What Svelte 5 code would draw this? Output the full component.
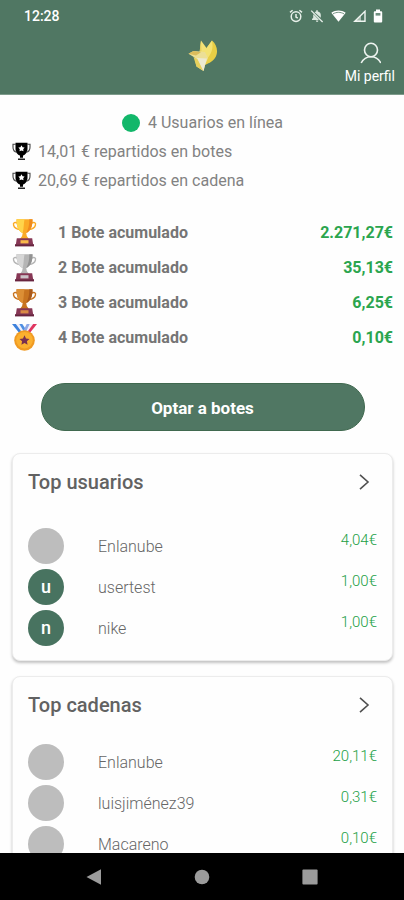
<script>
  const totals = ['14,01 € repartidos en botes', '20,69 € repartidos en cadena'];

  const pots = [
    { kind: 'gold', label: '1 Bote acumulado', amount: '2.271,27€' },
    { kind: 'silver', label: '2 Bote acumulado', amount: '35,13€' },
    { kind: 'bronze', label: '3 Bote acumulado', amount: '6,25€' },
    { kind: 'medal', label: '4 Bote acumulado', amount: '0,10€' }
  ];

  const cupColors = {
    gold: { light: '#ffd54a', mid: '#fbab26', dark: '#ef8a1d', plate: '#f9b94a' },
    silver: { light: '#d6d6d6', mid: '#b5b5b5', dark: '#929292', plate: '#cbc3c8' },
    bronze: { light: '#dc8f35', mid: '#c87420', dark: '#a9591a', plate: '#d98a45' }
  };

  const boards = [
    {
      title: 'Top usuarios',
      roomy: true,
      rows: [
        { name: 'Enlanube', initial: '', amount: '4,04€' },
        { name: 'usertest', initial: 'u', amount: '1,00€' },
        { name: 'nike', initial: 'n', amount: '1,00€' }
      ]
    },
    {
      title: 'Top cadenas',
      roomy: false,
      rows: [
        { name: 'Enlanube', initial: '', amount: '20,11€' },
        { name: 'luisjiménez39', initial: '', amount: '0,31€' },
        { name: 'Macareno', initial: '', amount: '0,10€' }
      ]
    }
  ];
</script>

<div class="screen">
  <header>
    <div class="status">
      <span>12:28</span>
      <div class="status-icons">
        <svg width="14" height="14" viewBox="0 0 14 14" fill="none" stroke="#e8f0ea" stroke-width="1.5">
          <circle cx="7" cy="7.6" r="4.8" />
          <path d="M7 5v3l1.8 1.2M1 3.4 3.6 1.2M13 3.4 10.4 1.2" />
        </svg>
        <svg width="14" height="14" viewBox="0 0 14 14">
          <path d="M4.6 3.3A3.6 3.6 0 0 1 6.2 2.4V1.2h1.6v1.2A3.7 3.7 0 0 1 10.8 6v2.8zM3.4 5.2 9 10.9H2v-1l1.2-1.2V6zM5.8 11.6h2.6a1.3 1.3 0 0 1-2.6 0z" fill="#dce8e0" />
          <path d="M1.2 1.6 12.6 13" stroke="#e8f0ea" stroke-width="1.3" />
        </svg>
        <svg width="15" height="12" viewBox="0 0 15 12">
          <path d="M.3 2.8C4.5-.4 10.5-.4 14.7 2.8L7.5 11.8z" fill="#fff" />
          <path d="M2 3.9C5.5 1.8 9.5 1.8 13 3.9" fill="none" stroke="#507763" stroke-width=".8" />
        </svg>
        <svg width="13" height="12" viewBox="0 0 13 12">
          <path d="M1.8 11.2 12 1.3v9.9z" fill="none" stroke="#f0f5f1" stroke-width="1.4" />
          <path d="M2 11.2 8 5.4v5.8z" fill="#f0f5f1" opacity=".55" />
        </svg>
        <svg width="10" height="14" viewBox="0 0 10 14">
          <path d="M3 .6h4v1.6h1.2q1 0 1 1v9.2q0 1-1 1H1.8q-1 0-1-1V3.2q0-1 1-1H3z" fill="#fff" />
          <path d="M2.6 4h4.8v2.6H2.600z" fill="#6f9080" />
        </svg>
      </div>
    </div>
    <div class="bar">
      <svg class="logo" width="32" height="32" viewBox="0 0 32 32" role="img" aria-label="Logo">
        <path d="M15 .5 20.500 8 19 14 13.500 13z" fill="#f3e277" />
        <path d="M15 .5 15.500 11 13.500 13z" fill="#e5d05c" />
        <path d="M26 .5C31.500 5 32.500 13 29 18 26 22.500 21.500 23.500 19 25L15.500 15z" fill="#e8ce45" />
        <path d="M26 .5C27.500 8 26 14 19 21L14.500 14 18.500 9.500 20.500 8z" fill="#f3e272" />
        <path d="M2.500 13.700 7.500 11 19 12 22 18 19 25 17.500 31 10.500 26.500 8.500 17.500z" fill="#ecdf96" />
        <path d="M2.500 13.700 7.500 11 15 12.300 10 15.500z" fill="#dcbc5c" />
        <path d="M7.500 17 12 19.500 17.500 31 10.500 26.500z" fill="#e6d05c" />
        <path d="M11 18 21 18.500 19 25 17.500 31z" fill="#ede9d0" />
      </svg>
      <a class="profile" href="#perfil">
        <svg width="22" height="22" viewBox="0 0 22 22" fill="none" stroke="#eef4f0" stroke-width="1.6">
          <ellipse cx="12" cy="8" rx="6.5" ry="6.7" />
          <path d="M2.200 21C4.200 17 7.500 14.700 12 14.700S19.800 17 21.800 21" />
        </svg>
        <span>Mi perfil</span>
      </a>
    </div>
  </header>

  <main>
    <p class="online"><i class="dot"></i>4 Usuarios en línea</p>
    {#each totals as total}
      <p class="total">
        <svg width="19" height="20" viewBox="0 0 19 20">
          <path d="M3.500.8h12v5.700c0 3.900-2.200 6.400-4.500 7.100v2.100H8v-2.100C5.700 12.900 3.500 10.400 3.500 6.500z" fill="#000" />
          <path d="M4 2.300H1v2.900c0 3 1.600 4.700 4 5M15 2.300h3v2.900c0 3-1.600 4.700-4 5" fill="none" stroke="#444" stroke-width="1.100" />
          <path d="M6 16.500h7V18H6z" fill="#222" />
          <path d="m9.500 3.300 1.100 1.900 2 .4-1.400 1.600.3 2.100-2-.9-2 .9.300-2.100-1.400-1.600 2-.4z" fill="#fff" />
        </svg>
        {total}
      </p>
    {/each}

    <ul class="pots">
      {#each pots as pot}
        <li>
          {#if pot.kind === 'medal'}
            <svg width="26" height="30" viewBox="0 0 26 30">
              <path d="M0 1h5.500l8 9.500-3.500 3z" fill="#3d82dc" />
              <path d="M3.800 1h3.500l6.500 8-1.800 3z" fill="#f1f1fb" />
              <path d="M7.300 1h3l3 4.500L11.500 8z" fill="#4f8fe2" />
              <path d="M25 1h-5.500l-8 9.500 3.500 3z" fill="#e0355f" />
              <path d="M21.200 1h-3.500l-6.500 8 1.800 3z" fill="#f5f0fa" />
              <path d="M17.700 1h-3l-4 8 2 2.500z" fill="#8fa9e6" />
              <circle cx="12.500" cy="17.500" r="10.300" fill="#f09a22" />
              <circle cx="12.500" cy="17.200" r="8.300" fill="#fbb02f" />
              <path d="m12.500 12.300 1.500 3.200 3.500.4-2.600 2.400.7 3.500-3.100-1.700-3.100 1.700.7-3.500-2.600-2.400 3.500-.4z" fill="#782f50" />
            </svg>
          {:else}
            {@const c = cupColors[pot.kind]}
            <svg width="26" height="30" viewBox="0 0 26 30">
              <path d="M6 5.300C3 3.600.8 4.600 1.600 7.300c.7 2.500 3.400 4 6.500 4.300M19 5.300c3-1.700 5.200-.7 4.400 2-.7 2.500-3.400 4-6.500 4.300" fill="none" stroke={c.mid} stroke-width="1.400" />
              <path d="M4.500 1.200h16c.2 7-1.900 11.900-6.300 13.700l.6 3.200 2.100 3H8l2.100-3 .6-3.200C6.300 13.100 4.300 8.200 4.500 1.200z" fill={c.mid} />
              <path d="M4.500 1.200h8c-1 5-.5 9-1.800 13.700C6.300 13.100 4.300 8.200 4.500 1.200z" fill={c.light} />
              <path d="M17.300 1.200h3.200c.2 7-1.900 11.900-6.300 13.700 2.200-4 3.200-8.200 3.100-13.700z" fill={c.dark} />
              <path d="M4.800 20.200h15.400l1 6.500H3.800z" fill="#873755" />
              <path d="M3 26.200h19v2.200H3z" fill="#68243f" />
              <path d="M8.500 22.200h8v3.200h-8z" fill={c.plate} />
            </svg>
          {/if}
          <span class="pot-label">{pot.label}</span>
          <span class="pot-amount">{pot.amount}</span>
        </li>
      {/each}
    </ul>

    <button class="cta" type="button">Optar a botes</button>

    {#each boards as board}
      <section class="card" class:roomy={board.roomy}>
        <a class="card-head" href="#ranking">
          <h2>{board.title}</h2>
          <svg width="12" height="18" viewBox="0 0 12 18" fill="none" stroke="#505050" stroke-width="1.600">
            <path d="m2 1.800 8 7.200-8 7.200" />
          </svg>
        </a>
        <ul>
          {#each board.rows as row}
            <li class="user">
              <span class="avatar" class:filled={row.initial}>{row.initial}</span>
              <span class="name">{row.name}</span>
              <span class="amount">{row.amount}</span>
            </li>
          {/each}
        </ul>
      </section>
    {/each}
  </main>

  <nav>
    <button type="button" aria-label="Atrás">
      <svg width="16" height="16" viewBox="0 0 16 16"><path d="M.5 8 15 .3v15.400z" fill="#9b9b9b" /></svg>
    </button>
    <button type="button" aria-label="Inicio">
      <svg width="16" height="16" viewBox="0 0 16 16"><circle cx="8" cy="8" r="7.300" fill="#9b9b9b" /></svg>
    </button>
    <button type="button" aria-label="Recientes">
      <svg width="16" height="16" viewBox="0 0 16 16"><rect x=".4" y=".4" width="15.200" height="15.200" rx="1" fill="#9b9b9b" /></svg>
    </button>
  </nav>
</div>

<style>
  .screen {
    display: flex;
    flex-direction: column;
    height: 100vh;
    overflow: hidden;
    background: #fefefe;
    color: #828282;
    font: 16px/20px Roboto, 'Liberation Sans', sans-serif;
  }

  p,
  h2,
  ul {
    margin: 0;
    padding: 0;
    list-style: none;
  }

  a {
    color: inherit;
    text-decoration: none;
  }

  svg {
    display: block;
    flex: none;
  }

  header {
    flex: none;
    background: #507763;
    color: #fff;
    border-bottom: 1px solid #7d9b8b;
  }

  .status {
    display: flex;
    align-items: center;
    justify-content: space-between;
    height: 32px;
    padding: 0 21px 0 24px;
    font-size: 14px;
    font-weight: 500;
  }

  .status-icons {
    display: flex;
    align-items: center;
    gap: 7px;
  }

  .bar {
    display: grid;
    grid-template-columns: 1fr auto 1fr;
    height: 62px;
  }

  .logo {
    grid-column: 2;
    margin-top: 8px;
  }

  .profile {
    justify-self: end;
    display: flex;
    flex-direction: column;
    align-items: center;
    gap: 2px;
    padding: 10px 9px 0 0;
    font-size: 14px;
  }

  main {
    flex: 1;
    min-height: 0;
    overflow: hidden;
    padding: 13px 11px 0 12px;
  }

  .online,
  .total {
    display: flex;
    align-items: center;
    height: 29px;
  }

  .online {
    justify-content: center;
    gap: 8px;
  }

  .dot {
    width: 18px;
    height: 18px;
    border-radius: 50%;
    background: #12b76a;
  }

  .total {
    gap: 7px;
  }

  .pots {
    padding: 20px 0 28px;
  }

  .pots li {
    display: flex;
    align-items: center;
    height: 35px;
    font-weight: 700;
  }

  .pot-label {
    flex: 1;
    padding-left: 20px;
    color: #757575;
  }

  .pot-amount {
    color: #2ba54e;
  }

  .cta {
    display: block;
    width: calc(100% - 57px);
    height: 48px;
    margin: 0 auto 22px;
    padding: 2px 0 0;
    border: 1px solid #40694f;
    border-radius: 24px;
    background: #507763;
    color: #fff;
    font: 700 17px/20px Roboto, 'Liberation Sans', sans-serif;
  }

  .card {
    margin-bottom: 15px;
    padding: 12px 15px;
    border: 1px solid #ececec;
    border-radius: 8px;
    background: #fefefe;
    box-shadow: 0 2px 3px rgba(0, 0, 0, 0.24);
  }

  .card-head {
    display: flex;
    align-items: center;
    justify-content: space-between;
    height: 32px;
    margin-bottom: 20px;
    padding-right: 7px;
  }

  .roomy .card-head {
    margin-bottom: 27px;
  }

  h2 {
    color: #626262;
    font-size: 20px;
    line-height: 24px;
    font-weight: 500;
  }

  .user {
    display: flex;
    align-items: center;
    height: 41px;
  }

  .avatar {
    width: 36px;
    height: 36px;
    border-radius: 50%;
    background: #bdbdbd;
    color: #fff;
    font-size: 18px;
    font-weight: 500;
    line-height: 36px;
    text-align: center;
  }

  .avatar.filled {
    background: #487360;
  }

  .name {
    flex: 1;
    padding: 2px 0 0 34px;
    color: #666;
    line-height: 18px;
    font-weight: 300;
  }

  .amount {
    align-self: flex-start;
    padding-top: 5px;
    color: #22a046;
    font-size: 15px;
    font-weight: 300;
  }

  nav {
    flex: none;
    display: flex;
    align-items: center;
    justify-content: space-between;
    height: 47px;
    padding: 0 86px;
    background: #000;
  }

  nav button {
    padding: 0;
    border: 0;
    background: none;
  }
</style>
